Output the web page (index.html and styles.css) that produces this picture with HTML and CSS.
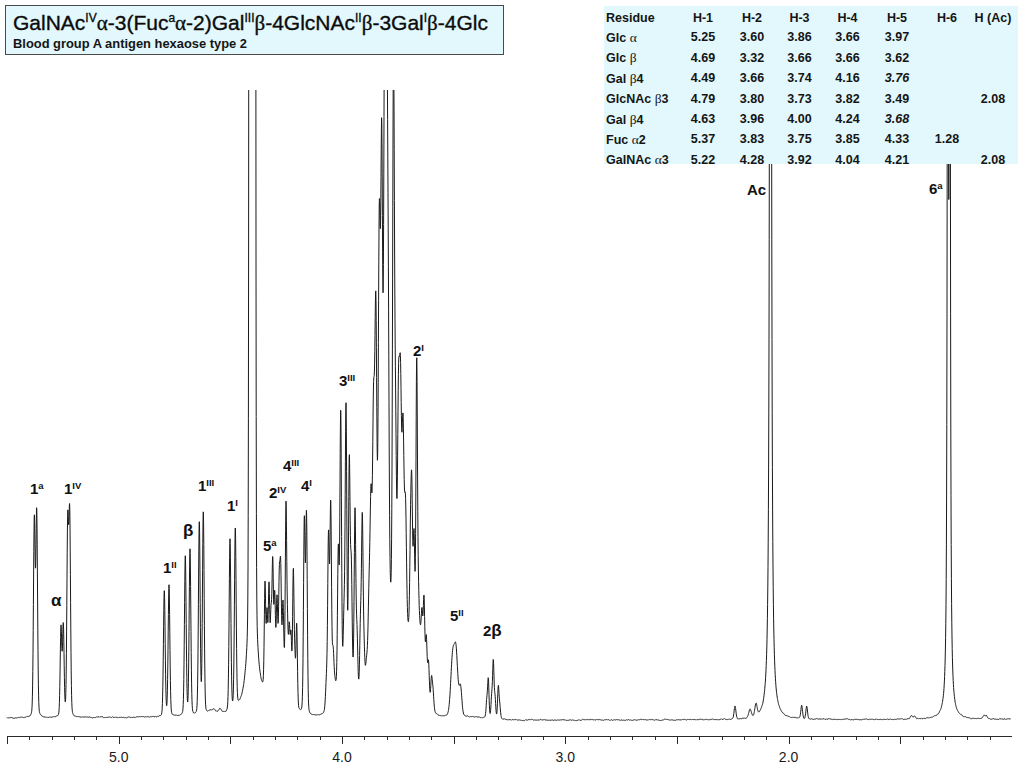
FILE: index.html
```html
<!DOCTYPE html>
<html lang="en">
<head>
<meta charset="utf-8">
<title>Blood group A antigen hexaose type 2 – 1H NMR</title>
<link rel="stylesheet" href="styles.css">
</head>
<body>
<div class="figure">
  <svg class="plot" width="1024" height="768" viewBox="0 0 1024 768" xmlns="http://www.w3.org/2000/svg">
    <defs>
      <clipPath id="plot-clip"><rect x="0" y="90" width="1024" height="678"></rect></clipPath>
    </defs>
    <path id="trace" class="trace" clip-path="url(#plot-clip)" d=""></path>

    <line class="axis-line" x1="7" y1="736.5" x2="1012" y2="736.5"></line>
    <g id="ticks" class="ticks"></g>
    <text class="tick-label" x="118.7" y="762">5.0</text>
    <text class="tick-label" x="342" y="762">4.0</text>
    <text class="tick-label" x="565.3" y="762">3.0</text>
    <text class="tick-label" x="788.6" y="762">2.0</text>

    <text class="peak-label" x="30" y="493.5">1<tspan class="sup" dy="-5">a</tspan></text>
    <text class="peak-label" x="51" y="605.5"><tspan class="greek">α</tspan></text>
    <text class="peak-label" x="64" y="493.5">1<tspan class="sup" dy="-4.5">IV</tspan></text>
    <text class="peak-label" x="163" y="572.5">1<tspan class="sup" dy="-4.5">II</tspan></text>
    <text class="peak-label" x="183" y="535.5"><tspan class="greek">β</tspan></text>
    <text class="peak-label" x="198" y="490.5">1<tspan class="sup" dy="-4.5">III</tspan></text>
    <text class="peak-label" x="227" y="510.5">1<tspan class="sup" dy="-4.5">I</tspan></text>
    <text class="peak-label" x="263" y="550.5">5<tspan class="sup" dy="-5">a</tspan></text>
    <text class="peak-label" x="269" y="497.5">2<tspan class="sup" dy="-4.5">IV</tspan></text>
    <text class="peak-label" x="283" y="470.5">4<tspan class="sup" dy="-4.5">III</tspan></text>
    <text class="peak-label" x="301" y="490.5">4<tspan class="sup" dy="-4.5">I</tspan></text>
    <text class="peak-label" x="339" y="385.5">3<tspan class="sup" dy="-4.5">III</tspan></text>
    <text class="peak-label" x="413" y="355.5">2<tspan class="sup" dy="-4.5">I</tspan></text>
    <text class="peak-label" x="450" y="620.5">5<tspan class="sup" dy="-4.5">II</tspan></text>
    <text class="peak-label" x="483" y="635.5">2<tspan class="greek">β</tspan></text>
    <text class="peak-label" x="747" y="194.5">Ac</text>
    <text class="peak-label" x="929" y="194">6<tspan class="sup" dy="-5">a</tspan></text>
  </svg>

  <header class="title-box">
    <h1 class="title">GalNAc<sup>IV</sup><span class="gk">α</span>-3(Fuc<sup>a</sup><span class="gk">α</span>-2)Gal<sup>III</sup><span class="gk">β</span>-4GlcNAc<sup>II</sup><span class="gk">β</span>-3Gal<sup>I</sup><span class="gk">β</span>-4Glc</h1>
    <p class="subtitle">Blood group A antigen hexaose type 2</p>
  </header>

  <div class="shifts-panel">
    <table class="shifts">
      <colgroup>
        <col class="c-res"><col class="c-50"><col class="c-48"><col class="c-47"><col class="c-49"><col class="c-50"><col class="c-50"><col class="c-42">
      </colgroup>
      <thead>
        <tr><th class="res">Residue</th><th>H-1</th><th>H-2</th><th>H-3</th><th>H-4</th><th>H-5</th><th>H-6</th><th>H (Ac)</th></tr>
      </thead>
      <tbody>
        <tr><td class="res">Glc <span class="gk">α</span></td><td>5.25</td><td>3.60</td><td>3.86</td><td>3.66</td><td>3.97</td><td></td><td></td></tr>
        <tr><td class="res">Glc <span class="gk">β</span></td><td>4.69</td><td>3.32</td><td>3.66</td><td>3.66</td><td>3.62</td><td></td><td></td></tr>
        <tr><td class="res">Gal <span class="gk">β</span>4</td><td>4.49</td><td>3.66</td><td>3.74</td><td>4.16</td><td class="it">3.76</td><td></td><td></td></tr>
        <tr><td class="res">GlcNAc <span class="gk">β</span>3</td><td>4.79</td><td>3.80</td><td>3.73</td><td>3.82</td><td>3.49</td><td></td><td>2.08</td></tr>
        <tr><td class="res">Gal <span class="gk">β</span>4</td><td>4.63</td><td>3.96</td><td>4.00</td><td>4.24</td><td class="it">3.68</td><td></td><td></td></tr>
        <tr><td class="res">Fuc <span class="gk">α</span>2</td><td>5.37</td><td>3.83</td><td>3.75</td><td>3.85</td><td>4.33</td><td>1.28</td><td></td></tr>
        <tr><td class="res">GalNAc <span class="gk">α</span>3</td><td>5.22</td><td>4.28</td><td>3.92</td><td>4.04</td><td>4.21</td><td></td><td>2.08</td></tr>
      </tbody>
    </table>
  </div>
</div>
<script src="script.js"></script>
</body>
</html>
```

FILE: styles.css
```css
* { box-sizing: border-box; }

html, body {
  margin: 0;
  padding: 0;
  background: #ffffff;
}

body {
  font-family: "Liberation Sans", Arial, sans-serif;
  color: #111111;
}

.figure {
  position: relative;
  width: 1024px;
  height: 768px;
  overflow: hidden;
}

.plot { display: block; }

.trace {
  fill: none;
  stroke: #1a1a1a;
  stroke-width: 1;
  stroke-linejoin: round;
}

.axis-line,
.ticks line {
  stroke: #2a2a2a;
  stroke-width: 1;
  shape-rendering: crispEdges;
}

.tick-label {
  font-family: "Liberation Sans", Arial, sans-serif;
  font-size: 14px;
  fill: #1a1a1a;
  text-anchor: middle;
}

.peak-label {
  font-family: "Liberation Sans", Arial, sans-serif;
  font-weight: 700;
  font-size: 15px;
  fill: #111111;
}

.peak-label .sup { font-size: 9.5px; }

.peak-label .greek { font-size: 17px; }

.gk { font-family: "Liberation Serif", "DejaVu Serif", serif; }

/* title box */
.title-box {
  position: absolute;
  left: 5px;
  top: 5px;
  width: 499px;
  height: 50px;
  border: 1px solid #4a4a4a;
  background: #e2f8fc;
  padding: 5px 0 0 7px;
}

.title {
  margin: 0;
  font-size: 21px;
  line-height: 24px;
  font-weight: 400;
  white-space: nowrap;
  color: #0c0c0c;
  -webkit-text-stroke: 0.35px #0c0c0c;
}

.title sup {
  font-size: 12px;
  line-height: 0;
  vertical-align: 8px;
}

.subtitle {
  margin: 1px 0 0;
  font-size: 12.9px;
  line-height: 15px;
  font-weight: 700;
  color: #151515;
}

/* chemical shift table */
.shifts-panel {
  position: absolute;
  left: 604px;
  top: 6px;
  width: 414px;
  height: 158px;
  background: #e2f8fc;
  padding: 2.5px 4px 0 0;
}

.shifts {
  border-collapse: collapse;
  table-layout: fixed;
  width: 410px;
  font-size: 12.5px;
  font-weight: 700;
  color: #151515;
}

.c-res { width: 74px; }
.c-50 { width: 50px; }
.c-48 { width: 48px; }
.c-47 { width: 47px; }
.c-49 { width: 49px; }
.c-42 { width: 42px; }

.shifts th,
.shifts td {
  height: 19.4px;
  padding: 0;
  text-align: center;
  font-weight: 700;
  line-height: 19.4px;
  white-space: nowrap;
}

.shifts .res {
  text-align: left;
  padding-left: 2px;
}

.shifts .it { font-style: italic; }

.shifts .gk {
  font-weight: 400;
  font-size: 13.5px;
}
```

FILE: script.js
```js
(function () {
  var SVGNS = "http://www.w3.org/2000/svg";
  var X4 = 342, K = 223.3;
  function xOf(ppm) { return X4 + (4 - ppm) * K; }

  // [x (px), height (px), width (px), shape]  P = pseudo-Voigt, G = Gaussian, L = Lorentzian
  var peaks = [
    // H-1 region
    [34.3, 195, .85], [36.7, 203, .85],
    [61, 88, .8], [63.3, 90, .8],
    [67.7, 188, .85], [69.7, 196, .85],
    [164.3, 126, .85], [169, 131, .85],
    [185.3, 160, .85], [190, 166, .85],
    [199.3, 193, .85], [203.3, 203, .85],
    [209.5, 4, 2], [214, 5, 2], [220, 5, 2],
    [230, 172, .85], [235.3, 180, .85],
    // HDO
    [252.3, 100000, 1.1, "G"], [252.3, 300, 3, "L"],
    // 4.35 - 4.2 cluster
    [279, 45, 9, "G"],
    [265, 103, .7], [267, 70, .7], [269, 95, .7], [271, 60, .7], [272.7, 110, .7],
    [274.7, 74, .7], [277, 68, .7], [279.3, 83, .7], [280.7, 93, .7], [283, 68, .7],
    [286, 171, .7], [287.5, 50, .7], [289.3, 60, .7], [291, 57, .7], [293.3, 126, .7],
    [294.8, 40, .7], [296.7, 82, .7],
    // 4I
    [304.3, 190, .8], [306.5, 196, .8],
    // 4.05 - 3.9
    [348, 35, 9, "G"],
    [326.5, 30, .9], [328.5, 170, .8], [330.7, 200, .8], [333, 40, .8], [334.5, 20, 1.5],
    [338.3, 140, .8], [340.7, 275, .8], [344, 60, .8], [346, 270, .8], [349.3, 215, .8],
    [351.3, 110, .8], [355, 175, .8], [357, 55, .8], [360.5, 70, .8], [362.3, 178, .8],
    [364, 45, .8],
    // 3.9 - 3.75 main cluster
    [384, 150, 6, "G"], [400, 60, 6, "G"],
    [366.5, 40, 1.2], [369, 90, 1], [371, 180, 1], [373.5, 250, 1], [375.8, 330, 1],
    [379.3, 370, 1], [381.7, 410, .9], [384.6, 500, .9], [386.6, 540, .9], [388.3, 230, .8],
    [393.5, 560, .9], [395.5, 190, .9], [398.5, 220, 1], [400.5, 220, 1], [403, 190, 1],
    [405.5, 120, 1],
    // 3.75 - 3.55
    [413, 60, 9, "G"],
    [408.5, 5, .8], [410.5, 90, .8], [411.8, 140, .8], [414, 110, .8], [416.7, 290, .75],
    [418.3, 50, .8], [420, 35, 1.2], [422, 55, .8], [424, 85, .8], [426.3, 55, .8],
    [428.5, 38, .8], [431.5, 28, .8], [433, 18, .8],
    // 5II
    [452.5, 55, 1.8], [456, 62, 1.8], [460.5, 28, 1.3],
    // 2 beta
    [486.8, 16, .7], [488.3, 38, .7], [491.7, 20, .7], [493.3, 56, .7], [495, 20, .7],
    [498.3, 32, .7], [499.8, 12, .7],
    // high field
    [735, 13, .9], [750, 8, 1.2], [756, 12, 1.1],
    [770.5, 2400, .65, "L"],
    [801.7, 13, .8], [806.7, 13, .8],
    [911.5, 3, 1], [914.5, 3, 1],
    [947.8, 1300, .5, "L"], [949.8, 1300, .5, "L"],
    [984, 4, 1], [986.5, 3, 1]
  ];

  function shape(d, p) {
    var H = p[1], s = p[2], t = p[3] || "P";
    if (t === "G") return H * Math.exp(-d * d / (2 * s * s));
    if (t === "L") return H / (1 + (d / s) * (d / s));
    var g = Math.exp(-d * d / (2 * s * s));
    var w = 1.177 * s;
    return H * (0.85 * g + 0.15 / (1 + (d / w) * (d / w)));
  }

  function signal(x) {
    var v = 0;
    for (var i = 0; i < peaks.length; i++) {
      var d = x - peaks[i][0];
      if (d > 90 || d < -90) continue;
      v += shape(d, peaks[i]);
    }
    return v;
  }

  function base(x) {
    if (x < 160) return 717 + (160 - x) / 150;
    if (x < 470) return 717;
    if (x < 510) return 717 + 3 * (x - 470) / 40;
    return 720 - 0.7 * (x - 510) / 500;
  }

  var seed = 12345;
  function rnd() {
    seed = (seed * 16807) % 2147483647;
    return seed / 2147483647;
  }

  var parts = [];
  var n = 0;
  for (var x = 7; x <= 1011; x += 0.2) {
    n = n * 0.85 + (rnd() - 0.5) * 0.5;
    var y = base(x) + n - signal(x);
    parts.push((parts.length ? "L" : "M") + x.toFixed(1) + " " + y.toFixed(2));
  }
  document.getElementById("trace").setAttribute("d", parts.join(""));

  var g = document.getElementById("ticks");
  for (var i = 55; i >= 11; i--) {
    var tx = Math.round(xOf(i / 10)) + 0.5;
    var major = i % 5 === 0;
    var line = document.createElementNS(SVGNS, "line");
    line.setAttribute("x1", tx);
    line.setAttribute("x2", tx);
    line.setAttribute("y1", 736.5);
    line.setAttribute("y2", major ? 743.5 : 740);
    g.appendChild(line);
  }
})();
```
